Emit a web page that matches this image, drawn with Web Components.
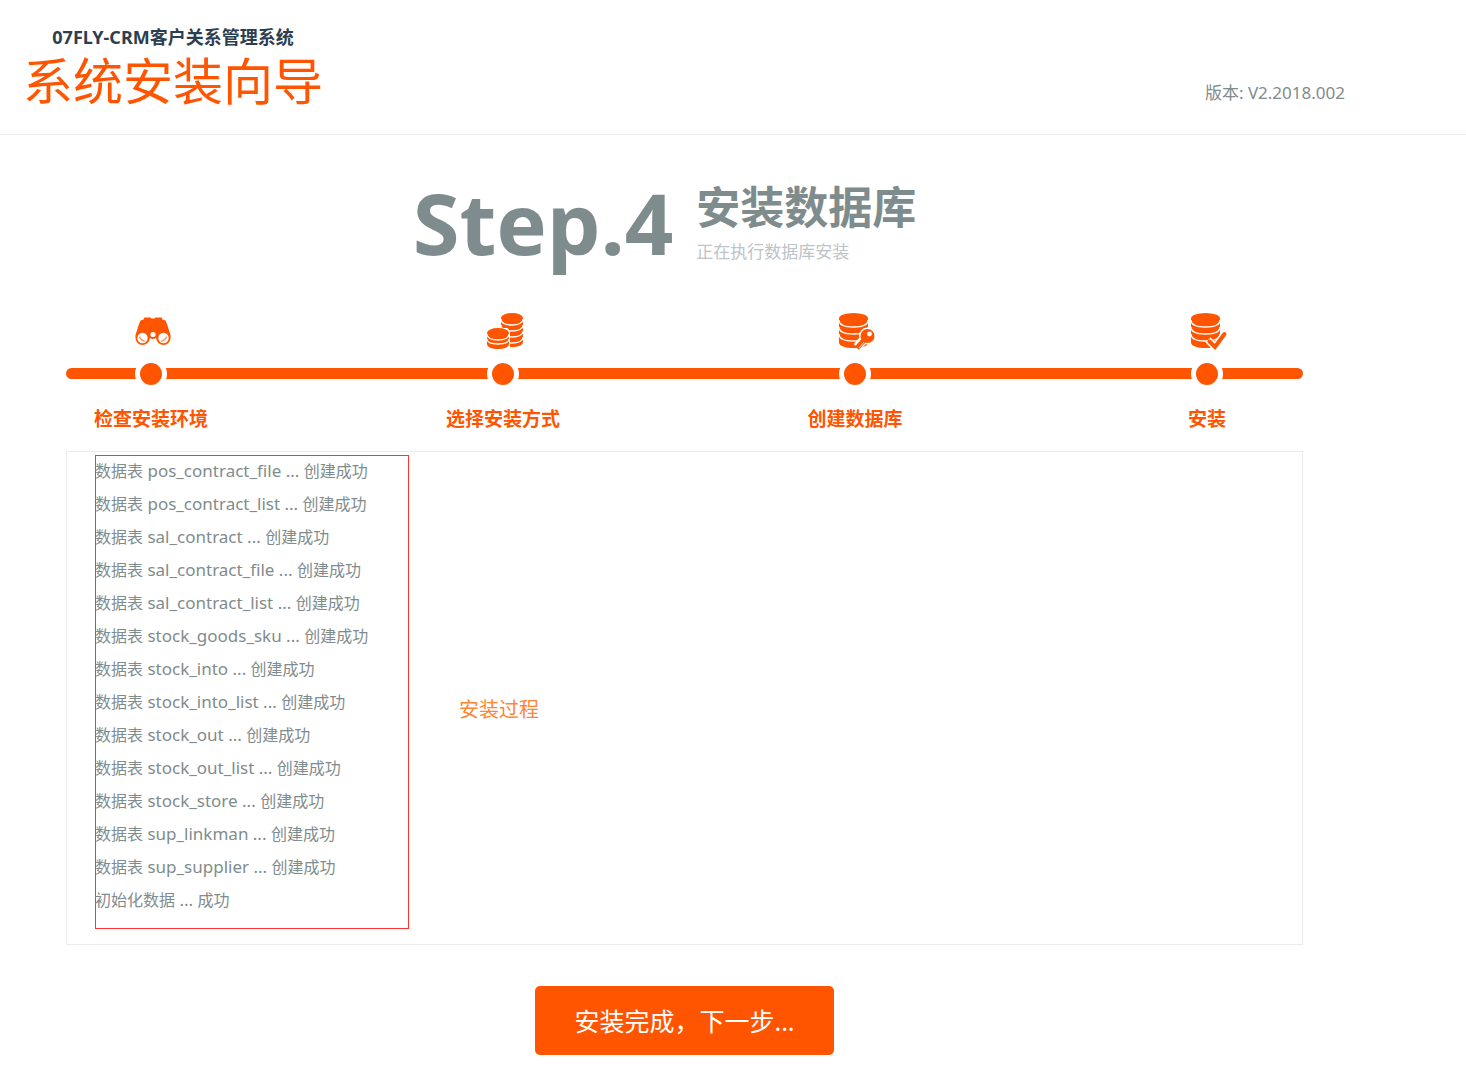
<!DOCTYPE html>
<html lang="zh-CN">
<head>
<meta charset="utf-8">
<title>07FLY-CRM 系统安装向导</title>
<style>
body{margin:0;background:#fff;color:#7f8c8d;font:17px/33px "Noto Sans","Noto Sans CJK SC",sans-serif;--accent:#ff5500;--line:#ececec}
</style>
</head>
<body>
<install-header product="07FLY-CRM客户关系管理系统" version="V2.2018.002">系统安装向导</install-header>
<install-page>
  <step-heading step="Step.4"><span slot="title">安装数据库</span><span slot="note">正在执行数据库安装</span></step-heading>
  <step-track>
    <step-item icon="binoculars">检查安装环境</step-item>
    <step-item icon="coins">选择安装方式</step-item>
    <step-item icon="key">创建数据库</step-item>
    <step-item icon="check">安装</step-item>
  </step-track>
  <install-log>安装过程</install-log>
  <next-button>安装完成，下一步...</next-button>
</install-page>
<script>
class BaseElement extends HTMLElement{
  connectedCallback(){
    if(!this.shadowRoot) this.attachShadow({mode:'open'}).innerHTML=this.render();
  }
}
const ICONS={
  binoculars:`<path fill="#ff5500" d="M9.500 4.500h6l1 1h3l1-1h6l1 2 3 1q2 4 3.500 10 2 4 1.500 8-1 6-7 6.500-6 0-7.500-7-3 2-6 0-1.500 7-7.500 7Q1.500 31.500.500 25.500q-.5-4 1.500-8Q3.500 11.500 5.500 7.500l3-1z"/><g fill="#fff"><circle cx="7.500" cy="25" r="5.200"/><circle cx="28.500" cy="25" r="5.200"/><circle cx="18" cy="21.500" r="2.600"/></g><g fill="none" stroke="#ff5500" stroke-width="1.200" opacity=".65"><path d="M4.500 23.500q1 4 5.500 4.500M31.500 23.500q-1 4-5.500 4.500"/></g>`,
  coins:`<g fill="#ff5500"><path d="M14 5v24c0 3 5 5 11 5s11-2 11-5V5z"/><ellipse cx="25" cy="5" rx="11" ry="5"/></g><path d="M14 6c0 5 5 6 11 6s11-2 11-6M14 12c0 4 5 6 11 6s11-2 11-6M14 18c0 4 5 6 11 6s11-2 11-6M14 24c0 4 5 6 11 6s11-2 11-6" fill="none" stroke="#fff" stroke-width="1.300"/><path fill="#fff" d="M0 15h20q3 1 3 6v15H0z"/><g fill="#ff5500"><path d="M0 20v11c0 3 5 5 11 5s11-2 11-5V20z"/><ellipse cx="11" cy="20" rx="11" ry="5"/></g><path d="M0 21c0 4 5 6 11 6s11-2 11-6M0 26c0 4 5 5 11 5s11-1 11-5" fill="none" stroke="#fff" stroke-width="1.300"/>`,
  database:`<g fill="#ff5500"><path d="M0 6v23c0 4 6 6 15 6s14-2 14-6V6z"/><ellipse cx="14.500" cy="5.500" rx="14.500" ry="5.500"/></g><path d="M0 7c0 5 6 7 14.500 7S29 12 29 7M0 14c0 5 6 7 14.500 7S29 19 29 14M0 21c0 5 6 7 14.500 7S29 26 29 21" fill="none" stroke="#fff" stroke-width="1.400"/>`
};
ICONS.key=ICONS.database+`<path d="M27 24 18 34" stroke="#fff" stroke-width="9"/><circle cx="28.500" cy="23" r="8.500" fill="#fff"/><path d="M27 25 18 35" stroke="#ff5500" stroke-width="5"/><path d="m20 35 6-7" stroke="#fff" stroke-width=".8"/><circle cx="28.500" cy="23" r="7" fill="#ff5500"/><circle cx="30.500" cy="21" r="2.400" fill="#fff"/>`;
ICONS.check=ICONS.database+`<path d="m17 27 7 7 10-14" fill="none" stroke="#fff" stroke-width="7"/><path d="m18.500 28.500 5.500 5.500 9.500-13" fill="none" stroke="#ff5500" stroke-width="4" stroke-linecap="round"/>`;

customElements.define('install-header',class extends BaseElement{
  render(){return `<style>
    :host{display:block;border-bottom:1px solid var(--line)}
    header{display:flex;justify-content:space-between;align-items:flex-end;padding:25px 121px 23px 23px}
    .brand{display:flex;flex-direction:column;align-items:center;gap:2px}
    .product{margin:0;color:#2c3e50;font-size:18px;line-height:24px;font-weight:700}
    h1{margin:0;color:var(--accent);font-size:50px;line-height:60px;font-weight:400}
    .version{margin:0;padding-bottom:2px}
  </style><header><div class="brand"><p class="product">${this.getAttribute('product')}</p><h1><slot></slot></h1></div>
  <p class="version">版本: ${this.getAttribute('version')}</p></header>`}
});
customElements.define('install-page',class extends BaseElement{
  render(){return `<style>
    :host{display:block}
    main{padding:36px 163px 23px 66px}
  </style><main><slot></slot></main>`}
});
customElements.define('step-heading',class extends BaseElement{
  render(){return `<style>
    :host{display:flex;justify-content:center;gap:23px;height:142px;padding-right:40px}
    .step{font-size:85px;line-height:102px;font-weight:700}
    .text{display:flex;flex-direction:column;padding-top:8px}
    h2{margin:0;font-size:44px;line-height:56px;font-weight:700}
    p{margin:0;color:#bdc3c7}
  </style><div class="step">${this.getAttribute('step')}</div><div class="text"><h2><slot name="title"></slot></h2><p><slot name="note"></slot></p></div>`}
});
customElements.define('step-track',class extends BaseElement{
  render(){return `<style>
    :host{display:grid}
    .bar,.steps{grid-area:1/1}
    .bar{align-self:start;height:11px;margin-top:55px;border-radius:6px;background:var(--accent)}
    .steps{display:flex;justify-content:space-between;padding-right:11px}
  </style><div class="bar"></div><div class="steps"><slot></slot></div>`}
});
customElements.define('step-item',class extends BaseElement{
  render(){return `<style>
    :host{display:flex;flex-direction:column;align-items:center;width:170px;color:var(--accent)}
    svg{width:36px;height:36px;margin-left:3px;overflow:visible}
    .dot{width:22px;height:22px;margin:9px 0 12px;border:5px solid #fff;border-radius:50%;background:var(--accent)}
    .label{font-size:19px;line-height:34px;font-weight:700}
  </style><svg viewBox="0 0 36 36" aria-hidden="true">${ICONS[this.getAttribute('icon')]}</svg><span class="dot"></span><span class="label"><slot></slot></span>`}
});
customElements.define('install-log',class extends BaseElement{
  render(){
    const tables=['pos_contract_file','pos_contract_list','sal_contract','sal_contract_file','sal_contract_list','stock_goods_sku','stock_into','stock_into_list','stock_out','stock_out_list','stock_store','sup_linkman','sup_supplier'];
    return `<style>
    :host{display:flex;align-items:center;gap:50px;margin-top:15px;padding:3px 28px 15px;border:1px solid var(--line)}
    ul{box-sizing:border-box;width:314px;margin:0;padding:0 0 12px;list-style:none;box-shadow:inset 0 0 0 1px #ff3333}
    li{font-size:16px;white-space:nowrap}
    .name{font-size:17px;line-height:1}
    .caption{padding-top:34px;color:#ff8533;font-size:20px}
  </style><ul>${tables.map(t=>`<li>数据表<span class="name"> ${t} ... </span>创建成功</li>`).join('')}<li>初始化数据<span class="name"> ... </span>成功</li></ul><span class="caption"><slot></slot></span>`}
});
customElements.define('next-button',class extends BaseElement{
  render(){return `<style>
    :host{display:flex;justify-content:center;margin-top:41px}
    button{height:69px;padding:0 39px;border:0;border-radius:5px;background:var(--accent);color:#fff;font:25px/36px "Noto Sans","Noto Sans CJK SC",sans-serif;cursor:pointer}
  </style><button type="button"><slot></slot></button>`}
});
</script>
</body>
</html>
